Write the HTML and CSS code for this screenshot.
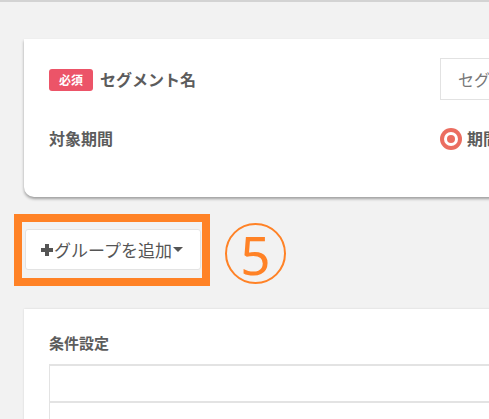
FILE: index.html
```html
<!DOCTYPE html>
<html lang="ja">
<head>
<meta charset="utf-8">
<link rel="stylesheet" href="styles.css">
</head>
<body>
<div class="page">
  <section class="card card-top">
    <div class="row row-name">
      <div class="label"><span class="badge">必須</span><span class="label-text">セグメント名</span></div>
      <div class="field"><div class="input">セグメント名を入力</div></div>
    </div>
    <div class="row row-period">
      <div class="label"><span class="label-text">対象期間</span></div>
      <div class="field"><span class="radio"></span><span class="radio-text">期間を指定しない</span></div>
    </div>
  </section>

  <div class="actions">
    <button class="add-btn"><span class="plus"></span>グループを追加<span class="caret"></span></button>
    <div class="highlight"></div>
    <div class="num"><span>5</span></div>
  </div>

  <section class="card card-cond">
    <div class="cond-title">条件設定</div>
    <div class="table">
      <div class="tr tr-head"></div>
      <div class="tr tr-body"><span class="link">編集</span></div>
    </div>
  </section>
</div>
</body>
</html>
```
FILE: styles.css
```css
html, body {
  margin: 0;
  padding: 0;
}
body {
  background: #f2f2f2;
  border-top: 2px solid #d3d3d3;
  font-family: "Noto Sans CJK JP", "Noto Sans", sans-serif;
  color: #5a5a5a;
  overflow: hidden;
  height: 417px;
}
.page {
  padding-top: 37px;
  padding-left: 24px;
}
.card {
  background: #fff;
  width: 520px;
  box-sizing: border-box;
}
.card-top {
  height: 158px;
  border-radius: 0 0 0 10px;
  box-shadow: 0 2px 3px rgba(0,0,0,0.35);
  padding: 19px 0 0 25px;
}
.row {
  display: grid;
  grid-template-columns: 391px 1fr;
  align-items: center;
}
.row-name {
  height: 42px;
}
.row-period {
  margin-top: 24px;
  height: 28px;
}
.label {
  display: flex;
  align-items: center;
}
.badge {
  display: inline-flex;
  align-items: center;
  justify-content: center;
  width: 44px;
  height: 22px;
  background: #ec5468;
  color: #fff;
  font-size: 12px;
  font-weight: 700;
  border-radius: 3px;
  margin-right: 7px;
  margin-top: 1px;
}
.label-text {
  font-size: 16px;
  font-weight: 700;
  color: #5c5c5c;
}
.input {
  height: 42px;
  box-sizing: border-box;
  border: 1px solid #e2e2e2;
  padding: 0 0 0 17px;
  display: flex;
  align-items: center;
  font-size: 16px;
  color: #777;
  white-space: nowrap;
  overflow: hidden;
}
.field {
  display: flex;
  align-items: center;
  white-space: nowrap;
}
.radio {
  width: 22px;
  height: 22px;
  box-sizing: border-box;
  border-radius: 50%;
  background: #eb6d60;
  position: relative;
  margin-right: 5px;
  margin-top: 2px;
}
.radio::before {
  content: "";
  position: absolute;
  left: 4px;
  top: 4px;
  width: 14px;
  height: 14px;
  border-radius: 50%;
  background: #fff;
}
.radio::after {
  content: "";
  position: absolute;
  left: 7px;
  top: 7px;
  width: 8px;
  height: 8px;
  border-radius: 50%;
  background: #eb6d60;
}
.radio-text {
  font-size: 16px;
  font-weight: 700;
  color: #5c5c5c;
}
.actions {
  position: relative;
  height: 112px;
  display: flex;
  align-items: flex-start;
  padding-top: 32px;
  box-sizing: border-box;
  margin-left: -23px;
  padding-left: 24px;
}
.add-btn {
  width: 176px;
  height: 41px;
  background: #fff;
  border: 1px solid #e3e3e3;
  border-radius: 3px;
  font-family: "Noto Sans CJK JP", "Noto Sans", sans-serif;
  font-size: 17px;
  color: #555;
  display: flex;
  align-items: center;
  padding: 0 0 0 15px;
  box-sizing: border-box;
  line-height: 1;
}
.plus {
  width: 12px;
  height: 12px;
  position: relative;
  margin-right: 1px;
}
.plus::before, .plus::after {
  content: "";
  position: absolute;
  background: #555;
}
.plus::before {
  left: 0;
  top: 4px;
  width: 12px;
  height: 4px;
}
.plus::after {
  left: 4px;
  top: 0;
  width: 4px;
  height: 12px;
}
.caret {
  width: 0;
  height: 0;
  border-left: 5px solid transparent;
  border-right: 5px solid transparent;
  border-top: 5px solid #555;
  margin-left: 1px;
}
.highlight {
  position: absolute;
  left: 13px;
  top: 17px;
  width: 196px;
  height: 72px;
  box-sizing: border-box;
  border: 8px solid #ff8226;
}
.num {
  margin-left: 24px;
  margin-top: -6px;
  width: 61px;
  height: 61px;
  box-sizing: border-box;
  border: 2.5px solid #ff8226;
  border-radius: 50%;
  display: flex;
  align-items: center;
  justify-content: center;
  color: #ff8226;
  font-family: "Noto Sans", sans-serif;
  font-size: 53px;
  line-height: 1;
}
.num span {
  margin-top: 1px;
}
.card-cond {
  height: 140px;
  box-shadow: 0 0 2px rgba(0,0,0,0.12);
  padding: 22px 0 0 25px;
}
.cond-title {
  font-size: 15px;
  font-weight: 700;
  color: #5c5c5c;
  height: 33px;
  line-height: 24px;
}
.table {
  border-top: 2px solid #e3e3e3;
  border-left: 1px solid #e3e3e3;
}
.tr-head {
  height: 35px;
  border-bottom: 2px solid #e3e3e3;
}
.tr-body {
  height: 40px;
  position: relative;
}
.link {
  position: absolute;
  left: 346px;
  top: 16px;
  color: #2a8fd6;
  font-size: 14px;
  line-height: 1;
}
```
